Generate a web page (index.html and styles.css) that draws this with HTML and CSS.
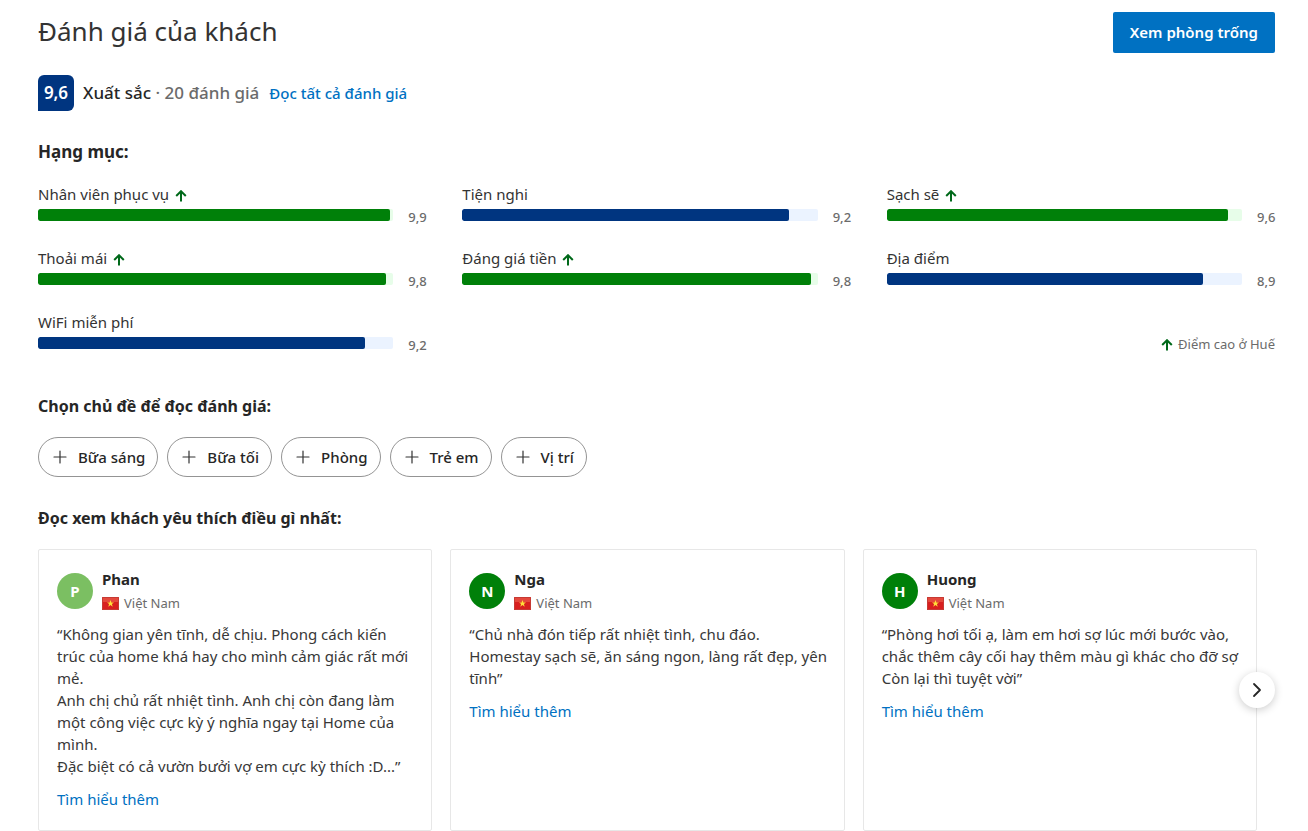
FILE: index.html
```
<!DOCTYPE html>
<html lang="vi">
<head>
    <meta charset="UTF-8" />
    <meta name="viewport" content="width=device-width, initial-scale=1" />
    <title>Đánh giá của khách</title>
    <link rel="stylesheet" href="styles.css">
</head>
<body>
    <svg class="sprite" aria-hidden="true">
        <symbol id="arrow-up" viewBox="0 0 12 12">
            <path d="M6 11.5V1.5M1.2 6 6 1.2 10.8 6" fill="none" stroke="currentColor" stroke-width="2" />
        </symbol>
        <symbol id="plus" viewBox="0 0 14 14">
            <path d="M7 1v12M1 7h12" fill="none" stroke="currentColor" stroke-width="1.2" stroke-linecap="round" />
        </symbol>
        <symbol id="flag-vn" viewBox="0 0 17 13">
            <rect width="17" height="13" fill="#d81f1f" />
            <rect width="17" height="5" fill="#e4483c" />
            <path d="M.5.5h16v12H.5z" fill="none" stroke="#c63a34" />
            <path d="m8.500 3 .9 2.500h2.600l-2.100 1.600.8 2.600-2.200-1.600-2.200 1.600.8-2.600L5 5.500h2.600z" fill="#ffdf3a" />
        </symbol>
    </svg>

    <main class="reviews">
        <header class="top">
            <h1>Đánh giá của khách</h1>
            <button type="button" class="btn-primary">Xem phòng trống</button>
        </header>

        <div class="summary">
            <span class="badge">9,6</span>
            <span class="rating">Xuất sắc <span class="count">· 20 đánh giá</span></span>
            <a href="#all">Đọc tất cả đánh giá</a>
        </div>

        <h2 class="first">Hạng mục:</h2>
        <div class="categories">
            <div class="category high">
                <div class="label">Nhân viên phục vụ <svg class="up"><use href="#arrow-up" /></svg></div>
                <div class="bar"><div class="fill" style="width: 99%"></div></div>
                <div class="score">9,9</div>
            </div>
            <div class="category">
                <div class="label">Tiện nghi</div>
                <div class="bar"><div class="fill" style="width: 92%"></div></div>
                <div class="score">9,2</div>
            </div>
            <div class="category high">
                <div class="label">Sạch sẽ <svg class="up"><use href="#arrow-up" /></svg></div>
                <div class="bar"><div class="fill" style="width: 96%"></div></div>
                <div class="score">9,6</div>
            </div>
            <div class="category high">
                <div class="label">Thoải mái <svg class="up"><use href="#arrow-up" /></svg></div>
                <div class="bar"><div class="fill" style="width: 98%"></div></div>
                <div class="score">9,8</div>
            </div>
            <div class="category high">
                <div class="label">Đáng giá tiền <svg class="up"><use href="#arrow-up" /></svg></div>
                <div class="bar"><div class="fill" style="width: 98%"></div></div>
                <div class="score">9,8</div>
            </div>
            <div class="category">
                <div class="label">Địa điểm</div>
                <div class="bar"><div class="fill" style="width: 89%"></div></div>
                <div class="score">8,9</div>
            </div>
            <div class="category">
                <div class="label">WiFi miễn phí</div>
                <div class="bar"><div class="fill" style="width: 92%"></div></div>
                <div class="score">9,2</div>
            </div>
            <div class="legend"><svg class="up"><use href="#arrow-up" /></svg> Điểm cao ở Huế</div>
        </div>

        <h2>Chọn chủ đề để đọc đánh giá:</h2>
        <div class="topics">
            <button type="button"><svg><use href="#plus" /></svg>Bữa sáng</button>
            <button type="button"><svg><use href="#plus" /></svg>Bữa tối</button>
            <button type="button"><svg><use href="#plus" /></svg>Phòng</button>
            <button type="button"><svg><use href="#plus" /></svg>Trẻ em</button>
            <button type="button"><svg><use href="#plus" /></svg>Vị trí</button>
        </div>

        <h2>Đọc xem khách yêu thích điều gì nhất:</h2>
        <div class="carousel">
            <article class="card">
                <div class="author">
                    <span class="avatar light">P</span>
                    <div>
                        <h3>Phan</h3>
                        <div class="country"><svg><use href="#flag-vn" /></svg>Việt Nam</div>
                    </div>
                </div>
                <p>“Không gian yên tĩnh, dễ chịu. Phong cách kiến trúc của home khá hay cho mình cảm giác rất mới mẻ.<br>Anh chị chủ rất nhiệt tình. Anh chị còn đang làm một công việc cực kỳ ý nghĩa ngay tại Home của mình.<br>Đặc biệt có cả vườn bưởi vợ em cực kỳ thích :D...”</p>
                <a href="#phan">Tìm hiểu thêm</a>
            </article>
            <article class="card">
                <div class="author">
                    <span class="avatar">N</span>
                    <div>
                        <h3>Nga</h3>
                        <div class="country"><svg><use href="#flag-vn" /></svg>Việt Nam</div>
                    </div>
                </div>
                <p>“Chủ nhà đón tiếp rất nhiệt tình, chu đáo.<br>Homestay sạch sẽ, ăn sáng ngon, làng rất đẹp, yên tĩnh”</p>
                <a href="#nga">Tìm hiểu thêm</a>
            </article>
            <article class="card">
                <div class="author">
                    <span class="avatar">H</span>
                    <div>
                        <h3>Huong</h3>
                        <div class="country"><svg><use href="#flag-vn" /></svg>Việt Nam</div>
                    </div>
                </div>
                <p>“Phòng hơi tối ạ, làm em hơi sợ lúc mới bước vào, chắc thêm cây cối hay thêm màu gì khác cho đỡ sợ<br>Còn lại thì tuyệt vời”</p>
                <a href="#huong">Tìm hiểu thêm</a>
            </article>
            <button type="button" class="next" aria-label="Tiếp theo">
                <svg viewBox="0 0 16 16"><path d="m5 2 6 6-6 6" fill="none" stroke="currentColor" stroke-width="1.800" stroke-linecap="round" stroke-linejoin="round" /></svg>
            </button>
        </div>
    </main>
</body>
</html>
```
FILE: styles.css
```
* { box-sizing: border-box; }
body { margin: 0; background: #fff; color: #262626; font-family: "Segoe UI", "Noto Sans", sans-serif; font-size: 15px; line-height: 22px; }
h1, h2, h3, p { margin: 0; }
a { color: #0071c2; text-decoration: none; }
a:hover { text-decoration: underline; }
button { font: inherit; color: inherit; cursor: pointer; }
.sprite { display: none; }
.reviews { padding: 12px 33px 0 38px; }

.top { display: flex; justify-content: space-between; align-items: flex-start; }
h1 { font-size: 26px; line-height: 38px; font-weight: 400; color: #333; }
.btn-primary { height: 41px; padding: 0 17px 2px; border: none; border-radius: 2px; background: #0071c2; color: #fff; font-weight: 600; }

.summary { display: flex; align-items: center; margin-top: 22px; }
.badge { display: flex; align-items: center; justify-content: center; width: 36px; height: 36px; border-radius: 6px 6px 6px 0; background: #003580; color: #fff; font-size: 17px; font-weight: 600; }
.rating { margin: 0 10px 0 9px; font-size: 17px; font-weight: 500; }
.count { color: #6b6b6b; }
.summary a { font-weight: 500; }

h2 { margin-top: 30px; font-size: 16px; line-height: 22px; font-weight: 700; }
h2.first { font-size: 17px; }

.categories { display: grid; grid-template-columns: repeat(3, 1fr); gap: 22px 36px; margin: 20px 0 42px; }
.category { display: grid; grid-template-columns: 1fr 18px; column-gap: 15px; height: 42px; grid-template-rows: 26px 16px; }
.label { grid-column: 1 / 3; color: #333; }
.up { width: 12px; height: 12px; margin: 0 2px; color: #00691a; vertical-align: -2px; }
.bar { height: 12px; border-radius: 2px; background: #ebf3ff; overflow: hidden; }
.fill { height: 100%; border-radius: 2px; background: #003580; }
.high .bar { background: #e7fde9; }
.high .fill { background: #008009; }
.score { font-size: 13px; line-height: 16px; font-weight: 500; color: #6b6b6b; text-align: right; }
.legend { grid-column: 3; align-self: end; font-size: 13px; line-height: 18px; color: #6b6b6b; text-align: right; }

.topics { display: flex; gap: 9px; margin-top: 20px; }
.topics button { display: flex; align-items: center; gap: 11px; height: 40px; padding: 0 12px 0 14px; border: 1px solid #949494; border-radius: 20px; background: #fff; font-weight: 500; }
.topics svg { width: 14px; height: 14px; color: #333; }

.carousel { position: relative; display: grid; grid-template-columns: repeat(3, 1fr); gap: 18px; margin: 20px 18px 0 0; }
.card { min-height: 282px; padding: 17px 14px 17px 18px; border: 1px solid #e7e7e7; border-radius: 2px; }
.author { display: flex; align-items: center; gap: 9px; }
.avatar { display: flex; align-items: center; justify-content: center; width: 36px; height: 36px; border-radius: 50%; background: #008009; color: #fff; font-weight: 700; }
.avatar.light { background: #7bbf62; }
h3 { font-size: 15px; line-height: 24px; font-weight: 700; }
.country { display: flex; align-items: center; gap: 5px; font-size: 13px; line-height: 24px; color: #6b6b6b; }
.country svg { width: 17px; height: 13px; }
.card p { margin: 8px 0 11px; color: #383838; }
.next { position: absolute; top: 50%; right: -18px; display: flex; align-items: center; justify-content: center; width: 36px; height: 36px; margin-top: -18px; padding: 0; border: none; border-radius: 50%; background: #fff; box-shadow: 0 2px 8px rgba(0, 0, 0, 0.2); }
.next svg { width: 16px; height: 16px; }
```
